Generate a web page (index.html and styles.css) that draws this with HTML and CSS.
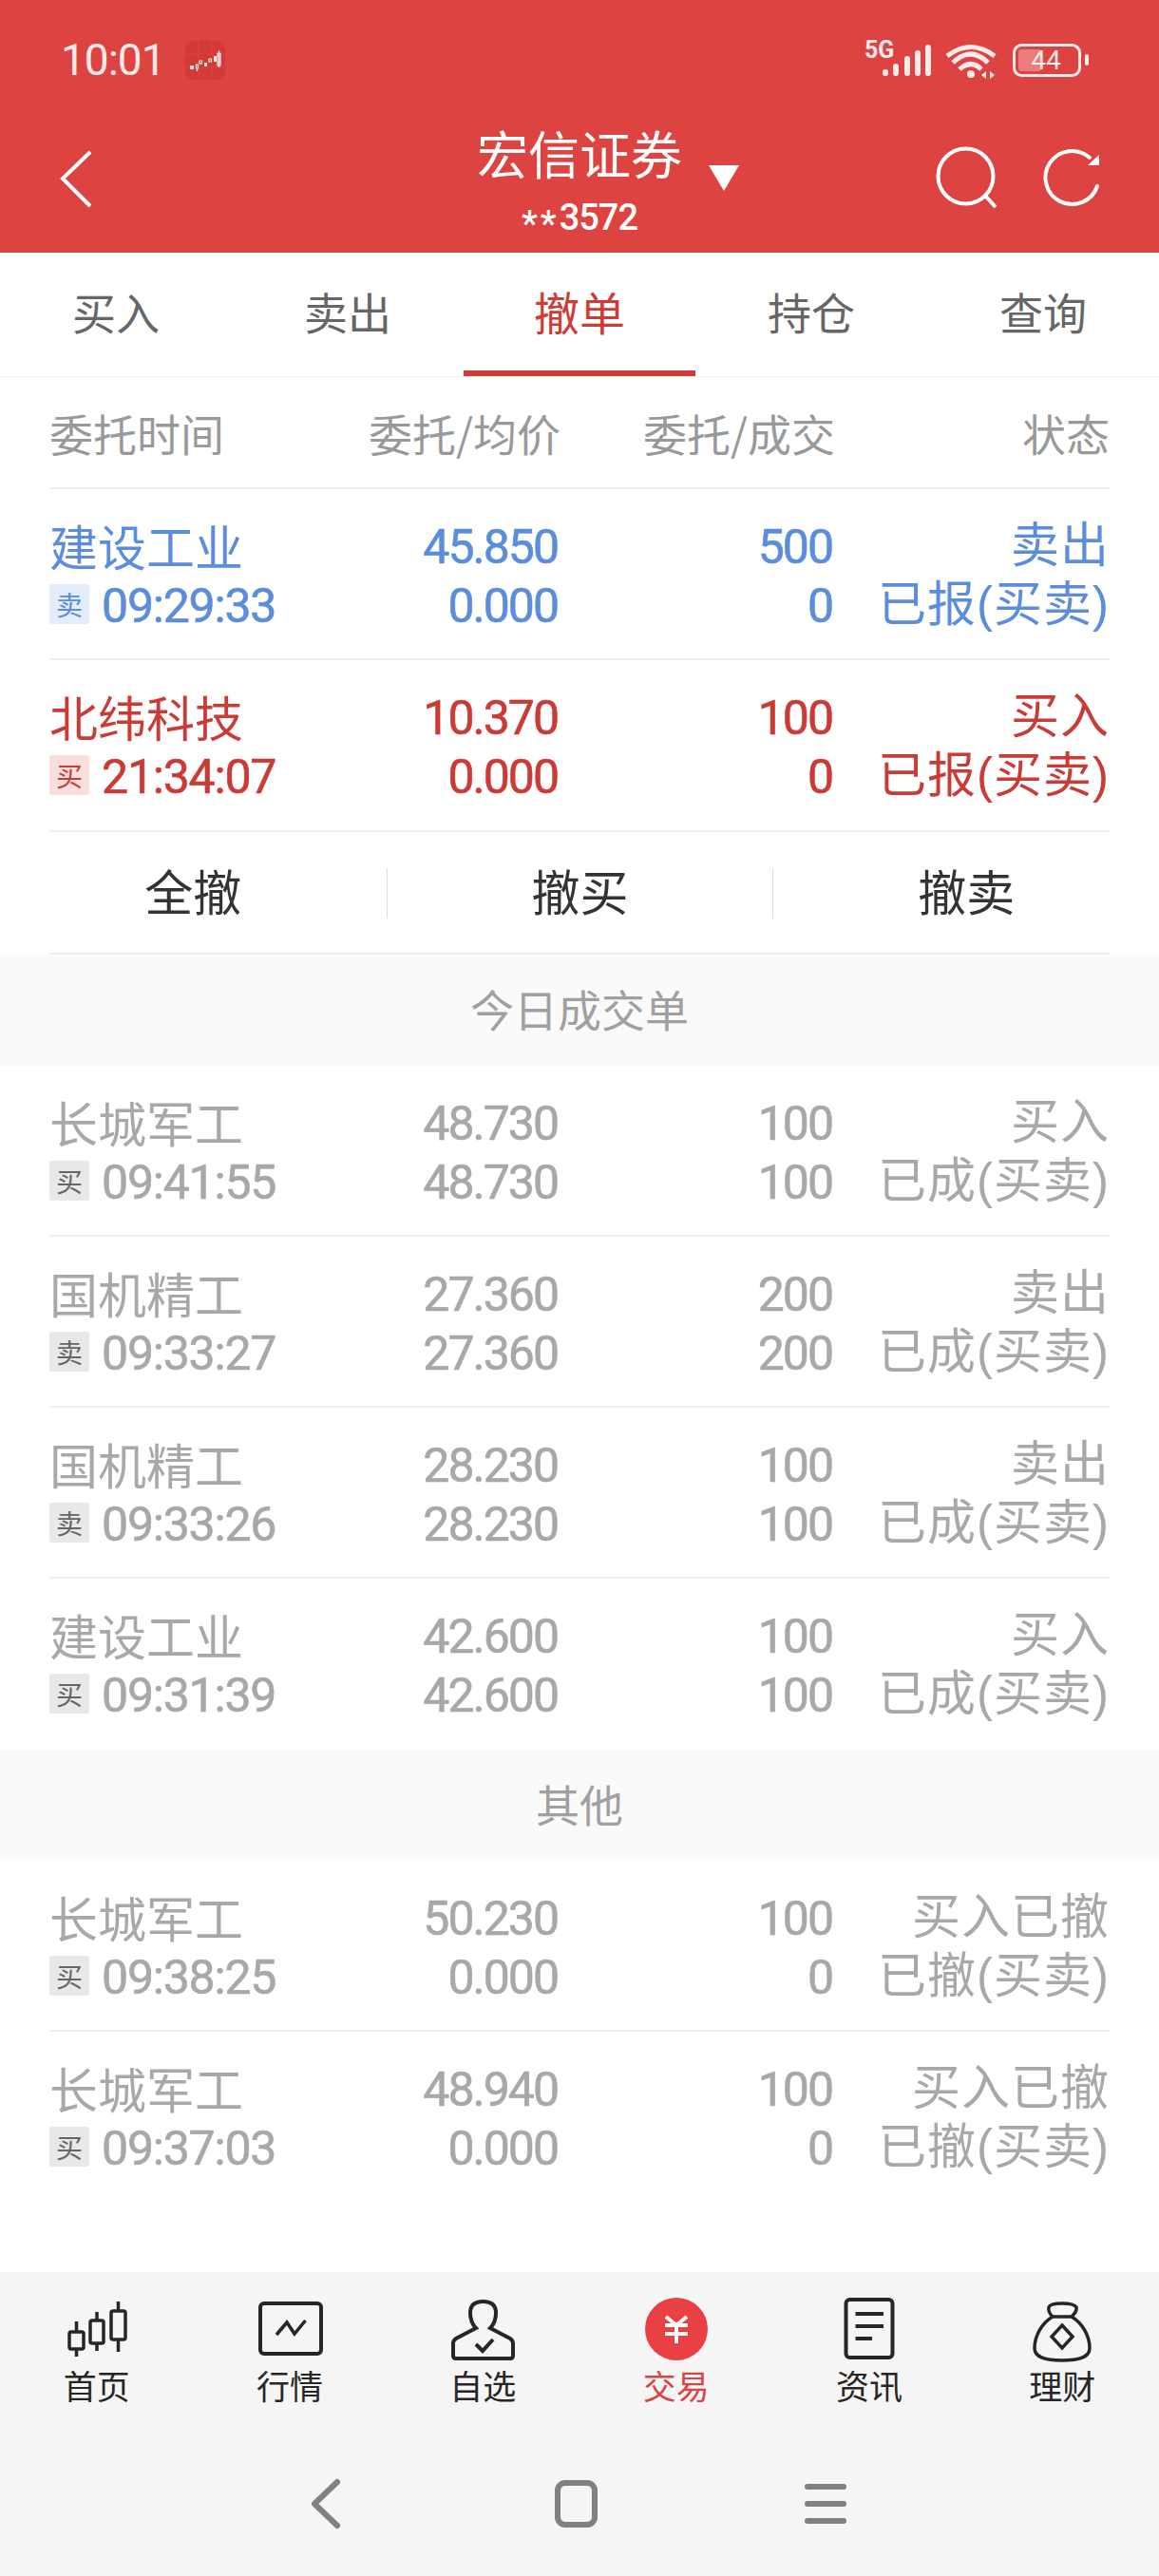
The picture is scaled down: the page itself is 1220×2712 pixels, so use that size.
FILE: index.html
```html
<!DOCTYPE html>
<html lang="zh-CN">
<head>
    <meta charset="UTF-8">
    <meta name="viewport" content="width=device-width, initial-scale=1.0">
    <title>宏信证券</title>
    <link rel="stylesheet" href="styles.css">
</head>
<body>
    <header class="top">
        <div class="status-bar">
            <div class="status-left">
                <span class="clock">10:01</span>
                <svg class="app-icon" width="42" height="41" viewBox="0 0 42 41">
                    <rect width="42" height="41" rx="9" fill="#d33936"/>
                    <path d="M0 14h42M14 0v41M28 0v41M0 28h42" stroke="#dc4441" stroke-width="1" fill="none"/>
                    <path d="M5 26h4v4H5zM20 23h3v4h-3zM30 16h3v6h-3z" fill="#fdeaea"/>
                    <path d="M11.500 25h2v4h-2zM12.500 29v3M15 21h2.500v3H15zM25 19h2.500v3H25zM34 13h3v13h-3zM35.500 10v18" fill="none" stroke="#fdeaea" stroke-width="1.200"/>
                </svg>
            </div>
            <svg class="status-right" width="250" height="56" viewBox="0 -6 250 56">
                <text x="5" y="21" class="net">5G</text>
                <g stroke="#ffeaea" stroke-width="6" stroke-linecap="round">
                    <path d="M27 36v1M38 30v7M50 22v15M61 16v21M72 10v27"/>
                </g>
                <g fill="none" stroke="#ffeaea" stroke-width="5">
                    <path d="M92 19Q117 0 142 19M98 26Q117 8 135 26M105 33Q117 22 128 33"/>
                </g>
                <circle cx="117" cy="38" r="4" fill="#ffeaea"/>
                <path d="M128 39l5-4v8zM137 35v8l5-4z" fill="#ffeaea"/>
                <rect x="162.500" y="7.500" width="69" height="32" rx="8" fill="none" stroke="#ffeaea" stroke-width="3"/>
                <rect x="167" y="12" width="24" height="23" rx="3" fill="#ea7d7b"/>
                <text x="196" y="33" text-anchor="middle" class="batt">44</text>
                <rect x="237" y="17" width="4" height="12" rx="2" fill="#ffeaea"/>
            </svg>
        </div>
        <div class="nav-bar">
            <svg class="back" width="40" height="64" viewBox="0 0 40 64">
                <path d="M33 2L4 30l29 29" fill="none" stroke="#fff" stroke-width="4"/>
            </svg>
            <div class="account">
                <div class="title">宏信证券<span class="caret"></span></div>
                <div class="sub"><span class="mask">**</span>3572</div>
            </div>
            <div class="nav-tools">
                <svg width="70" height="70" viewBox="0 0 70 70">
                    <circle cx="37.500" cy="31.500" r="29" fill="none" stroke="#fff" stroke-width="4"/>
                    <path d="M58 52l11 12" stroke="#fff" stroke-width="4" fill="none"/>
                </svg>
                <svg width="70" height="70" viewBox="0 0 70 70">
                    <path d="M65 42A28 28 0 1 1 57 12" fill="none" stroke="#fff" stroke-width="4" stroke-linecap="round"/>
                    <path d="M67 9V20H55Z" fill="#fff"/>
                </svg>
            </div>
        </div>
    </header>

    <nav class="tabs">
        <a class="tab">买入</a>
        <a class="tab">卖出</a>
        <a class="tab active">撤单</a>
        <a class="tab">持仓</a>
        <a class="tab">查询</a>
    </nav>

    <div class="list">
        <div class="head-row">
            <span>委托时间</span>
            <span>委托/均价</span>
            <span>委托/成交</span>
            <span>状态</span>
        </div>
        <div id="pending"></div>
    </div>

    <div class="actions">
        <button class="action">全撤</button>
        <button class="action">撤买</button>
        <button class="action">撤卖</button>
    </div>

    <div class="band">今日成交单</div>
    <div class="list" id="done"></div>
    <div class="band">其他</div>
    <div class="list" id="other"></div>

    <footer class="bottom">
        <div class="tabbar">
            <div class="tabbar-item">
                <svg width="80" height="70" viewBox="0 0 80 70" fill="none" stroke="#262626" stroke-width="3.500">
                    <rect x="11" y="37" width="15" height="18" rx="2"/><path d="M18.500 26v11M18.500 55v8"/>
                    <rect x="33" y="25" width="14" height="24" rx="2"/><path d="M40 16v9M40 49v8"/>
                    <rect x="55" y="15" width="15" height="30" rx="2"/><path d="M62.500 5v10M62.500 45v13"/>
                </svg>
                <span>首页</span>
            </div>
            <div class="tabbar-item">
                <svg width="80" height="70" viewBox="0 0 80 70" fill="none" stroke="#262626" stroke-width="4">
                    <rect x="9" y="7" width="64" height="53" rx="4"/>
                    <path d="M26 40l11-13 8 12 11.500-14" stroke-width="3.500"/>
                </svg>
                <span>行情</span>
            </div>
            <div class="tabbar-item">
                <svg width="80" height="70" viewBox="0 0 80 70" fill="none" stroke="#262626" stroke-width="4">
                    <path d="M33 33C28 28 27 22 27 17 27 8 33 5 40.500 5 48 5 54 8 54 17 54 22 53 28 48 33L69 44Q72 46 72 49V62Q72 65 69 65H12Q9 65 9 62V49Q9 46 12 44Z"/>
                    <path d="M33 50l7 7 11-12"/>
                </svg>
                <span>自选</span>
            </div>
            <div class="tabbar-item current">
                <svg width="80" height="70" viewBox="0 0 80 70" fill="none" stroke="#fff" stroke-width="4">
                    <circle cx="40" cy="34" r="33" fill="#e94043" stroke="none"/>
                    <path d="M29 21l11 9 11-9M28 30h24M28 39h24M40 30v19"/>
                </svg>
                <span>交易</span>
            </div>
            <div class="tabbar-item">
                <svg width="80" height="70" viewBox="0 0 80 70" fill="none" stroke="#262626" stroke-width="4">
                    <rect x="15.500" y="3" width="49" height="61" rx="4"/>
                    <path d="M25.500 18H55M25.500 31H55M25.500 44H43"/>
                </svg>
                <span>资讯</span>
            </div>
            <div class="tabbar-item">
                <svg width="80" height="70" viewBox="0 0 80 70" fill="none" stroke="#262626" stroke-width="3.500">
                    <path d="M30 21C27 18 25 15 26 11 27 8 34 7 40 7 47 7 53 8 55 11 56 15 53 18 50 21 62 28 69 42 69 54 69 64 58 67 40 67 22 67 11 64 11 54 11 42 18 28 30 21Z"/>
                    <path d="M30 21H50"/>
                    <path d="M40 30l11 12-11 12-11-12Z"/>
                </svg>
                <span>理财</span>
            </div>
        </div>
        <div class="sys-nav">
            <svg width="60" height="56" viewBox="0 0 60 56" fill="none" stroke="#808080" stroke-width="6" stroke-linejoin="round">
                <path d="M41 5L17 28l24 23" stroke-linecap="round"/>
            </svg>
            <svg width="60" height="56" viewBox="0 0 60 56" fill="none" stroke="#808080" stroke-width="6">
                <rect x="10" y="6" width="39" height="44" rx="8"/>
            </svg>
            <svg width="60" height="56" viewBox="0 0 60 56" fill="none" stroke="#808080" stroke-width="6" stroke-linecap="round">
                <path d="M10 10h38M10 28h38M10 46h38"/>
            </svg>
        </div>
    </footer>

    <script>
        // Order rows: name, side, time, price, avg, qty, filled, line 1 and line 2 of the status
        const pendingOrders = [
            ['建设工业', '卖', '09:29:33', '45.850', '0.000', '500', '0', '卖出', '已报(买卖)', 'sell'],
            ['北纬科技', '买', '21:34:07', '10.370', '0.000', '100', '0', '买入', '已报(买卖)', 'buy']
        ];
        const doneOrders = [
            ['长城军工', '买', '09:41:55', '48.730', '48.730', '100', '100', '买入', '已成(买卖)', 'off'],
            ['国机精工', '卖', '09:33:27', '27.360', '27.360', '200', '200', '卖出', '已成(买卖)', 'off'],
            ['国机精工', '卖', '09:33:26', '28.230', '28.230', '100', '100', '卖出', '已成(买卖)', 'off'],
            ['建设工业', '买', '09:31:39', '42.600', '42.600', '100', '100', '买入', '已成(买卖)', 'off']
        ];
        const otherOrders = [
            ['长城军工', '买', '09:38:25', '50.230', '0.000', '100', '0', '买入已撤', '已撤(买卖)', 'off'],
            ['长城军工', '买', '09:37:03', '48.940', '0.000', '100', '0', '买入已撤', '已撤(买卖)', 'off']
        ];

        function renderOrders(id, orders) {
            document.getElementById(id).innerHTML = orders.map(o => `
                <div class="order ${o[9]}">
                    <div class="name">${o[0]}</div>
                    <div class="num">${o[3]}</div>
                    <div class="num">${o[5]}</div>
                    <div class="state">${o[7]}</div>
                    <div class="when"><span class="side">${o[1]}</span><span class="num">${o[2]}</span></div>
                    <div class="num">${o[4]}</div>
                    <div class="num">${o[6]}</div>
                    <div class="state">${o[8]}</div>
                </div>`).join('');
        }

        renderOrders('pending', pendingOrders);
        renderOrders('done', doneOrders);
        renderOrders('other', otherOrders);
    </script>
</body>
</html>
```

FILE: styles.css
```css
* {
    box-sizing: border-box;
}

body {
    margin: 0;
    width: 1220px;
    height: 2712px;
    position: relative;
    background-color: #fff;
    font-family: "Noto Sans CJK SC", "Noto Sans", sans-serif;
    overflow: hidden;
}

/* red header */
.top {
    height: 266px;
    background-color: #dd4441;
    color: #fff;
}

.status-bar {
    height: 130px;
    padding: 40px 65px 0 64px;
    display: flex;
    justify-content: space-between;
    align-items: flex-start;
}

.status-left {
    display: flex;
    align-items: center;
    gap: 21px;
}

.clock {
    font-family: Roboto, sans-serif;
    font-size: 46px;
    line-height: 46px;
    letter-spacing: -1px;
    color: #ffeaea;
}

.status-right {
    margin-top: -6px;
}

.net {
    font-family: Roboto, sans-serif;
    font-size: 25px;
    font-weight: 700;
    fill: #ffeaea;
}

.batt {
    font-family: Roboto, sans-serif;
    font-size: 28px;
    fill: #ffeaea;
}

.nav-bar {
    display: flex;
    justify-content: space-between;
    align-items: flex-start;
    padding: 0 60px 0 62px;
}

.back {
    margin-top: 28px;
}

.account {
    position: absolute;
    left: 0;
    right: 0;
    top: 129px;
    text-align: center;
}

.title {
    display: inline-block;
    position: relative;
    font-size: 54px;
    line-height: 64px;
}

.caret {
    position: absolute;
    left: 100%;
    top: 45px;
    margin-left: 28px;
    border-left: 16px solid transparent;
    border-right: 16px solid transparent;
    border-top: 27px solid #fff;
}

.sub {
    font-family: Roboto, sans-serif;
    font-size: 38px;
    line-height: 40px;
    font-weight: 500;
    letter-spacing: -1px;
    margin-top: 16px;
}

.mask {
    vertical-align: -7px;
    letter-spacing: 3px;
}

.nav-tools {
    display: flex;
    gap: 41px;
    margin-top: 24px;
}

/* tabs */
.tabs {
    display: grid;
    grid-template-columns: repeat(5, 1fr);
    height: 131px;
    border-bottom: 1px solid #eee;
}

.tab {
    display: flex;
    align-items: center;
    justify-content: center;
    font-size: 46px;
    color: #666;
    padding-bottom: 8px;
}

.tab.active {
    font-size: 48px;
    color: #cf3b37;
    border-bottom: 6px solid #cf3b37;
    padding-bottom: 2px;
}

/* order table */
.list {
    padding: 0 52px;
}

.head-row,
.order {
    display: grid;
    grid-template-columns: 1fr 250px 289px 289px;
    text-align: right;
}

.head-row {
    height: 118px;
    align-items: center;
    font-size: 46px;
    color: #999;
    border-bottom: 2px solid #f0f0f0;
}

.head-row span:first-child {
    text-align: left;
}

.order {
    height: 180px;
    padding-top: 29px;
    grid-auto-rows: 62px;
    align-items: center;
    border-bottom: 2px solid #f0f0f0;
}

.order:last-child {
    border-bottom: none;
}

.name {
    text-align: left;
    font-size: 51px;
    line-height: 60px;
    padding-bottom: 2px;
}

.num {
    font-family: Roboto, sans-serif;
    font-size: 50px;
    letter-spacing: -2px;
    -webkit-text-stroke: 0.6px;
    padding: 2px 3px 0 0;
}

.when .num {
    letter-spacing: -1.2px;
}

.state {
    font-family: "Liberation Sans", "Noto Sans CJK SC", sans-serif;
    font-size: 51px;
    line-height: 58px;
    letter-spacing: 1px;
}

.when {
    display: flex;
    align-items: center;
    gap: 13px;
}

.side {
    width: 42px;
    height: 42px;
    border-radius: 3px;
    font-size: 28px;
    line-height: 42px;
    text-align: center;
    margin-top: -3px;
}

.sell {
    color: #5b8ddc;
}

.sell .side {
    background-color: #e3edfb;
}

.buy {
    color: #cb3a35;
}

.buy .side {
    background-color: #f8dfde;
}

.off {
    color: #a8a8a8;
}

.off .side {
    background-color: #e8e8e8;
    color: #666;
}

/* cancel buttons */
.actions {
    display: grid;
    grid-template-columns: repeat(3, 1fr);
    height: 130px;
    align-items: center;
    position: relative;
}

.actions::before,
.actions::after {
    content: "";
    position: absolute;
    left: 52px;
    right: 52px;
    height: 2px;
    background-color: #eee;
}

.actions::before {
    top: -1px;
}

.actions::after {
    bottom: 0;
}

.action {
    height: 53px;
    padding: 0 0 6px;
    border: none;
    border-left: 1px solid #ddd;
    background: none;
    font-family: inherit;
    font-size: 51px;
    line-height: 47px;
    color: #333;
}

.action:first-child {
    border-left: none;
}

.band {
    height: 117px;
    padding-bottom: 5px;
    background-color: #fafafa;
    color: #a0a0a0;
    font-size: 46px;
    line-height: 60px;
    display: flex;
    align-items: center;
    justify-content: center;
}

/* bottom */
.bottom {
    position: absolute;
    left: 0;
    right: 0;
    top: 2392px;
    height: 320px;
    background-color: #f5f5f5;
}

.tabbar {
    display: grid;
    grid-template-columns: repeat(6, 1fr);
    padding-top: 26px;
}

.tabbar-item {
    display: flex;
    flex-direction: column;
    align-items: center;
    font-size: 35px;
    line-height: 40px;
    color: #262626;
}

.tabbar-item svg {
    margin-bottom: 3px;
}

.tabbar-item.current {
    color: #dc4444;
}

.sys-nav {
    display: flex;
    justify-content: center;
    gap: 203px;
    padding: 77px 7px 0 0;
}
```
